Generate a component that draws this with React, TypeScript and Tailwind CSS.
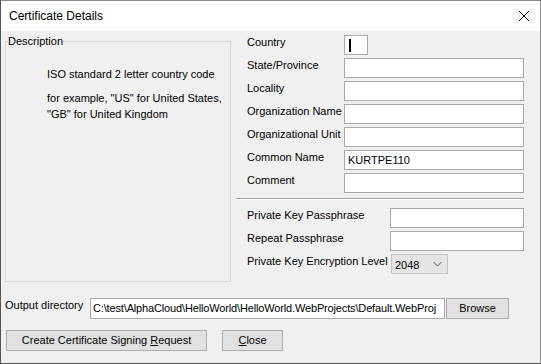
import React from "react";

const Field = ({
  label,
  value,
  labelW = "w-[108px]",
  inputW = "w-[180px]",
  caret = false,
}: {
  label: string;
  value?: string;
  labelW?: string;
  inputW?: string;
  caret?: boolean;
}) => (
  <div className="flex items-start h-[20px] mb-[3px]">
    <div className={`${labelW} pl-[11px] leading-[14px] whitespace-nowrap`}>{label}</div>
    <div
      className={`${inputW} h-[20px] bg-white border border-[#a9a9a9] flex items-center pl-[3px] overflow-hidden whitespace-nowrap`}
    >
      {caret && <div className="w-[2px] h-[13px] bg-black ml-[1px]" />}
      {value}
    </div>
  </div>
);

const App = () => {
  return (
    <div className="w-[541px] h-[364px] flex flex-col border border-[#8a8a8a] border-l-[#555555] border-b-[#555555] text-[11px] text-black font-['Liberation_Sans',Arial,sans-serif] bg-[#f0f0f0] overflow-hidden">
      <div className="h-[30px] bg-white flex items-center justify-between pl-[8px] pr-[10px] shrink-0 text-[12px]">
        <span>Certificate Details</span>
        <svg width="12" height="12" viewBox="0 0 12 12">
          <path d="M1 1 L11 11 M11 1 L1 11" stroke="#111" strokeWidth="1" />
        </svg>
      </div>

      <div className="flex-1 flex flex-col pt-[4px]">
        <div className="flex">
          {/* description group */}
          <div className="relative ml-[4px] mt-[6px] w-[226px] h-[241px] border border-[#d6d6d6] shrink-0">
            <span className="absolute left-[2px] top-[-8px] leading-[14px] bg-[#f0f0f0]">
              Description
            </span>
            <div className="pl-[41px] pt-[24px] leading-[16px] whitespace-nowrap">
              <p>ISO standard 2 letter country code</p>
              <p className="mt-[8px]">
                for example, "US" for United States,
                <br />
                "GB" for United Kingdom
              </p>
            </div>
          </div>

          {/* right form */}
          <div className="ml-[5px] w-[288px] flex flex-col">
            <Field label="Country" inputW="w-[24px]" caret />
            <Field label="State/Province" />
            <Field label="Locality" />
            <Field label="Organization Name" />
            <Field label="Organizational Unit" />
            <Field label="Common Name" value="KURTPE110" />
            <Field label="Comment" />
            <div className="mt-[2px] h-[2px] border-t border-[#a0a0a0] border-b border-b-white" />
            <div className="mt-[8px]">
              <Field label="Private Key Passphrase" labelW="w-[154px]" inputW="w-[134px]" />
              <Field label="Repeat Passphrase" labelW="w-[154px]" inputW="w-[134px]" />
              <div className="flex items-start h-[20px]">
                <div className="w-[155px] pl-[11px] leading-[14px] whitespace-nowrap">
                  Private Key Encryption Level
                </div>
                <div className="w-[57px] h-[20px] bg-[#e5e5e5] border border-[#c4c4c4] flex items-center justify-between pl-[3px] pr-[5px]">
                  <span className="pt-[2px]">2048</span>
                  <svg width="9" height="6" viewBox="0 0 9 6">
                    <path d="M0.5 1 L4.5 5 L8.5 1" stroke="#555" fill="none" strokeWidth="1" />
                  </svg>
                </div>
              </div>
            </div>
          </div>
        </div>

        {/* output directory */}
        <div className="flex items-start mt-[16px] ml-[4px]">
          <div className="w-[85px] leading-[14px] whitespace-nowrap">Output directory</div>
          <div className="w-[355px] h-[21px] bg-white border border-[#a9a9a9] flex items-center pl-[2px] overflow-hidden whitespace-nowrap tracking-[-0.15px]">
            C:\test\AlphaCloud\HelloWorld\HelloWorld.WebProjects\Default.WebProj
          </div>
          <button className="ml-[1px] w-[63px] h-[21px] bg-[#e1e1e1] border border-[#adadad]">
            Browse
          </button>
        </div>

        <div className="flex mt-[11px] ml-[5px] gap-[15px]">
          <button className="w-[201px] h-[21px] bg-[#e1e1e1] border border-[#adadad]">
            Create Certificate Signing <span className="underline">R</span>equest
          </button>
          <button className="w-[61px] h-[21px] bg-[#e1e1e1] border border-[#adadad]">
            <span className="underline">C</span>lose
          </button>
        </div>
      </div>
    </div>
  );
};

export default App;
